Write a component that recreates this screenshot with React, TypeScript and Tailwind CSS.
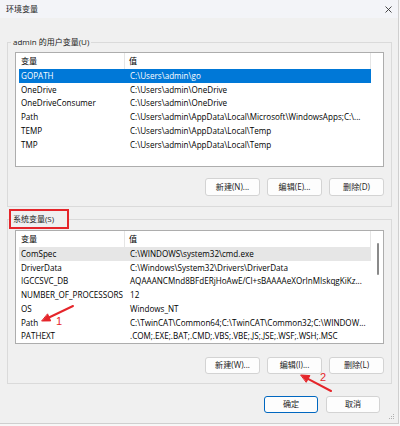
import clsx from 'clsx';

type Item = { name: string; value: string; sel?: 'blue' | 'gray' };

const USER_VARS: Item[] = [
  { name: 'GOPATH', value: 'C:\\Users\\admin\\go', sel: 'blue' },
  { name: 'OneDrive', value: 'C:\\Users\\admin\\OneDrive' },
  { name: 'OneDriveConsumer', value: 'C:\\Users\\admin\\OneDrive' },
  { name: 'Path', value: 'C:\\Users\\admin\\AppData\\Local\\Microsoft\\WindowsApps;C:\\...' },
  { name: 'TEMP', value: 'C:\\Users\\admin\\AppData\\Local\\Temp' },
  { name: 'TMP', value: 'C:\\Users\\admin\\AppData\\Local\\Temp' },
];

const SYS_VARS: Item[] = [
  { name: 'ComSpec', value: 'C:\\WINDOWS\\system32\\cmd.exe', sel: 'gray' },
  { name: 'DriverData', value: 'C:\\Windows\\System32\\Drivers\\DriverData' },
  { name: 'IGCCSVC_DB', value: 'AQAAANCMnd8BFdERjHoAwE/Cl+sBAAAAeXOrInMIskqgKiKz...' },
  { name: 'NUMBER_OF_PROCESSORS', value: '12' },
  { name: 'OS', value: 'Windows_NT' },
  { name: 'Path', value: 'C:\\TwinCAT\\Common64;C:\\TwinCAT\\Common32;C:\\WINDOW...' },
  { name: 'PATHEXT', value: '.COM;.EXE;.BAT;.CMD;.VBS;.VBE;.JS;.JSE;.WSF;.WSH;.MSC' },
];

const Btn = ({ label, primary, h = 'h-[18px]', w = 'w-[55px]' }: { label: string; primary?: boolean; h?: string; w?: string }) => (
  <div
    className={clsx(
      'flex items-center justify-center rounded-[3px] bg-[#fdfdfd] text-[#1b1b1b]',
      h,
      w,
      primary ? 'border border-[#0067c0]' : 'border border-[#d3d3d3]'
    )}
  >
    {label}
  </div>
);

const VarList = ({ items, scroll, h }: { items: Item[]; scroll?: boolean; h: string }) => (
  <div className={clsx('ml-[7px] flex w-[369px] border border-[#adadad] bg-white', h)}>
    <div className="w-[355px] overflow-hidden">
      <div className="flex h-[16px] items-center">
        <div className="w-[109px] border-r border-[#e5e5e5] pl-[5px] leading-[16px]">变量</div>
        <div className="w-[246px] border-r border-[#e5e5e5] pl-[4px] leading-[16px]">值</div>
      </div>
      {items.map((it) => (
        <div
          key={it.name + it.value}
          className={clsx(
            'ml-[3px] flex h-[13.75px] w-[352px] items-center',
            it.sel === 'blue' && 'bg-[#0078d7] text-white',
            it.sel === 'gray' && 'bg-[#e6e6e6]'
          )}
        >
          <div className="w-[109px] overflow-hidden whitespace-nowrap pl-[2px]">{it.name}</div>
          <div className="flex-1 overflow-hidden whitespace-nowrap pl-[2px]">{it.value}</div>
        </div>
      ))}
    </div>
    <div className="flex w-[12px] justify-center pt-[12px] pl-[1px]">
      {scroll && <div className="h-[32px] w-[2px] rounded-full bg-[#8a8a8a]" />}
    </div>
  </div>
);

export default function App() {
  return (
    <div className="relative h-[426px] w-[400px] overflow-hidden bg-[#f7f7f7] font-['Open_Sans','Noto_Sans_CJK_SC',sans-serif] text-[8.1px] text-black">
      <div className="relative flex h-[424px] w-[399px] flex-col border-r border-b border-[#cfcfcf] bg-[#f0f0f0]">
        {/* title bar */}
        <div className="flex h-[18px] items-center justify-between bg-[#f3f4f8] pl-[6px] pr-[6px]">
          <span className="text-[8px] text-[#1a1a1a]">环境变量</span>
          <svg width="7" height="7" viewBox="0 0 7 7">
            <path d="M0.5 0.5 L6.5 6.5 M6.5 0.5 L0.5 6.5" stroke="#333" strokeWidth="0.9" />
          </svg>
        </div>

        {/* user variables */}
        <fieldset className="ml-[7px] mt-[18px] w-[385px] border border-[#dadada] pb-[10px] pt-[4px]">
          <legend className="ml-[3px] px-[2px] text-[8px] leading-[12px] text-[#1a1a1a]">admin 的用户变量(U)</legend>
          <VarList items={USER_VARS} h="h-[115px]" />
          <div className="mt-[11px] flex w-[376px] justify-end gap-[7px]">
            <Btn label="新建(N)..." />
            <Btn label="编辑(E)..." />
            <Btn label="删除(D)" />
          </div>
        </fieldset>

        {/* system variables */}
        <fieldset className="ml-[7px] mt-[2px] w-[385px] border border-[#dadada] pb-[9px] pt-[1px]">
          <legend className="ml-[1px] w-[60px] border-2 border-[#e5252a] pl-[2px] text-[8px] leading-[16px] text-[#1a1a1a]">
            系统变量(S)
          </legend>
          <VarList items={SYS_VARS} scroll h="h-[114px]" />
          <div className="mt-[13px] flex w-[376px] justify-end gap-[7px]">
            <Btn label="新建(W)..." h="h-[17px]" />
            <Btn label="编辑(I)..." h="h-[17px]" />
            <Btn label="删除(L)" h="h-[17px]" />
          </div>
        </fieldset>

        <div className="mt-[12px] flex justify-end gap-[8px] pr-[18px]">
          <Btn label="确定" primary h="h-[17px]" w="w-[54px]" />
          <Btn label="取消" h="h-[17px]" w="w-[54px]" />
        </div>

        {/* resize grip */}
        <svg width="7" height="7" viewBox="0 0 7 7" className="absolute bottom-[3px] right-[3px]">
          <g fill="#b0b0b0">
            <rect x="5" y="1" width="1" height="1" />
            <rect x="3" y="3" width="1" height="1" />
            <rect x="5" y="3" width="1" height="1" />
            <rect x="1" y="5" width="1" height="1" />
            <rect x="3" y="5" width="1" height="1" />
            <rect x="5" y="5" width="1" height="1" />
          </g>
        </svg>
      </div>

      {/* annotations */}
      <svg width="400" height="426" className="pointer-events-none absolute left-0 top-0">
        <g stroke="#e5252a" strokeWidth="2" fill="#e5252a" strokeLinecap="round">
          <line x1="73" y1="306" x2="49" y2="317.5" />
          <polygon points="42,321 50.7,320.9 47.7,314.2" strokeWidth="1" strokeLinejoin="round" />
          <line x1="331" y1="391" x2="308" y2="378.8" />
          <polygon points="301,375 309.9,375.6 306.4,382" strokeWidth="1" strokeLinejoin="round" />
        </g>
        <g fill="#e5252a" fontFamily="Liberation Sans, sans-serif" fontSize="11">
          <text x="56" y="325">1</text>
          <text x="320" y="381">2</text>
        </g>
      </svg>
    </div>
  );
}
